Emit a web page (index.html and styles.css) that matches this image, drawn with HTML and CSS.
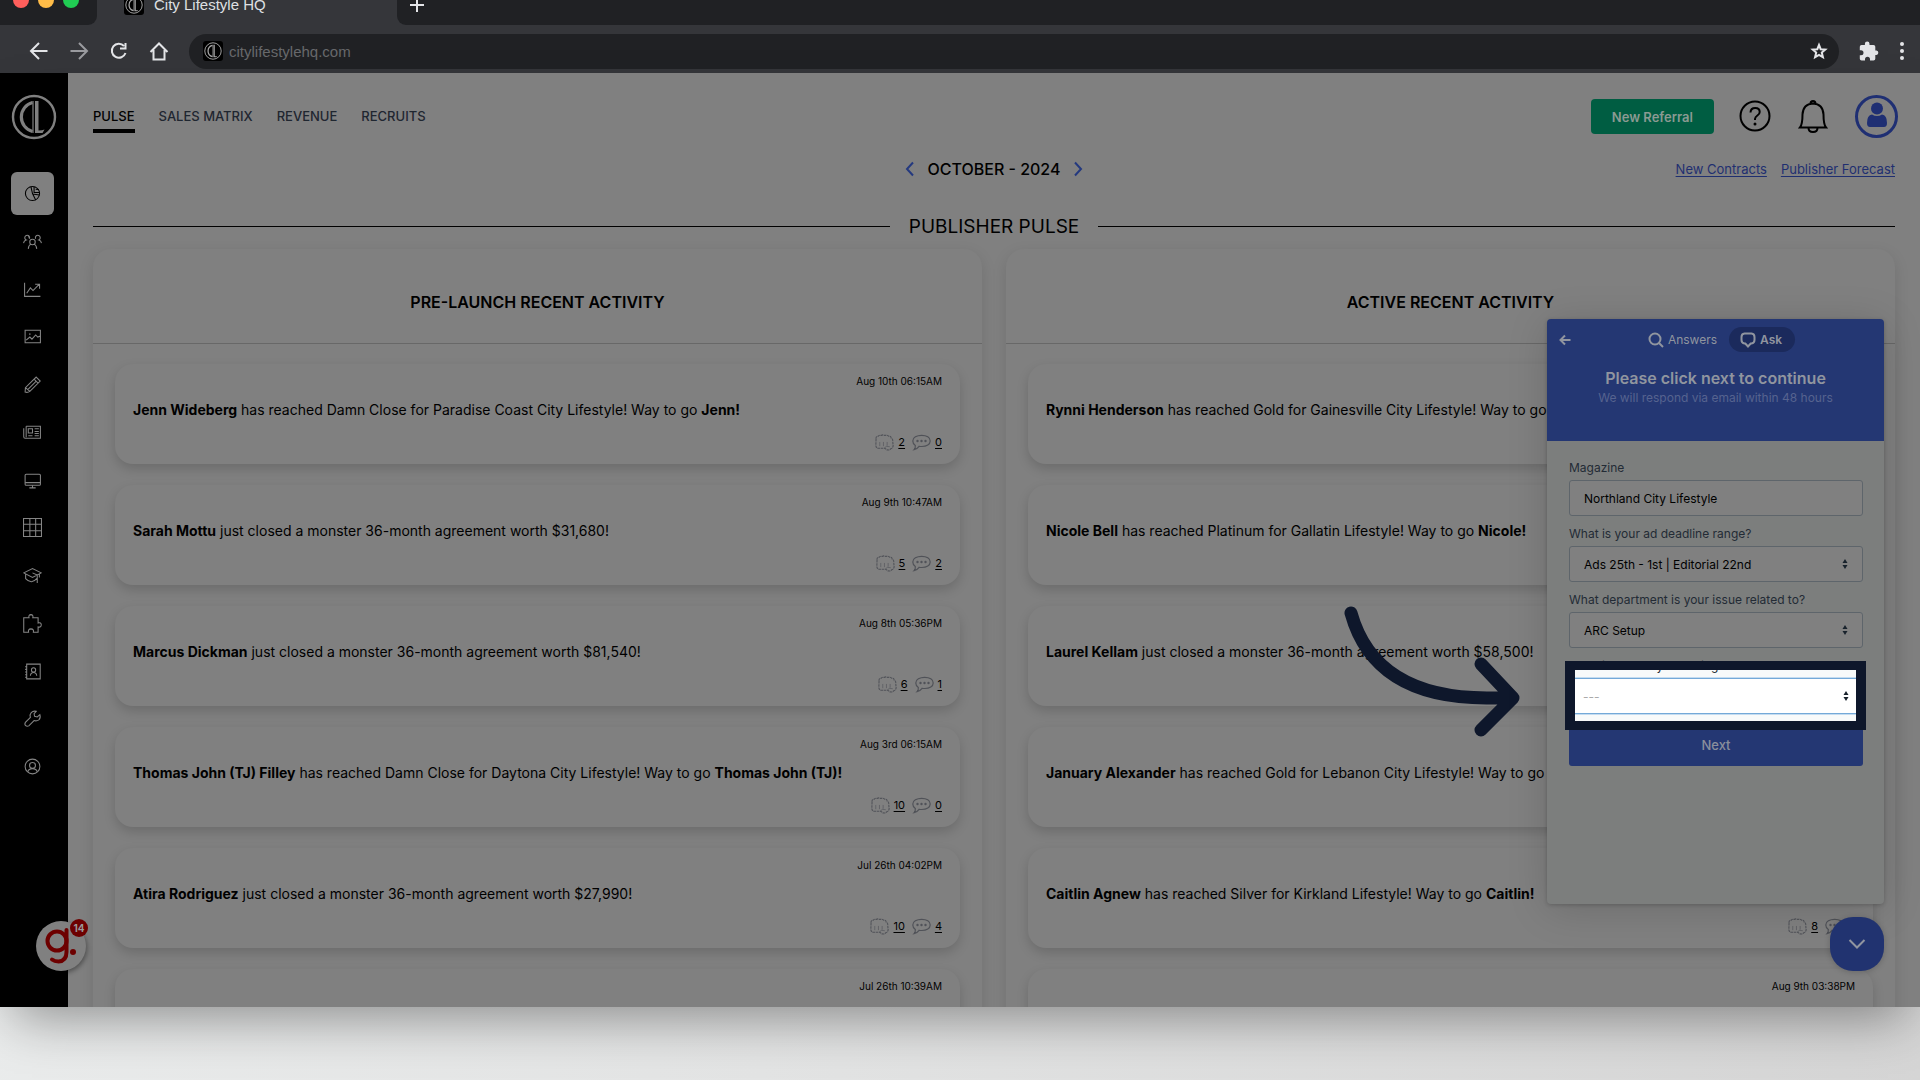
FILE: index.html
```
<!DOCTYPE html>
<html lang="en">
<head>
  <meta charset="UTF-8">
  <meta name="viewport" content="width=device-width, initial-scale=1.0">
  <title>City Lifestyle HQ</title>
  <link rel="stylesheet" href="styles.css">
</head>
<body>
  <svg class="defs" aria-hidden="true">
    <symbol id="logo" viewBox="0 0 46 46">
      <circle cx="23" cy="23" r="21" fill="none" stroke="currentColor" stroke-width="2.4"/>
      <path d="M21.500 8.500A15 15 0 0 0 21.500 37.500" fill="none" stroke="currentColor" stroke-width="3.200"/>
      <path d="M22 7v32" fill="none" stroke="currentColor" stroke-width="1.200"/>
      <path d="M24 7h3.500v29.500q4 0 6-1l-2 3.500H24z" fill="currentColor" stroke="none"/>
    </symbol>
    <symbol id="fist" viewBox="0 0 18 16">
      <path d="M1 4.500Q.7 2 2.800 2.200 3.800.6 5.700 1.300 7.500.2 9.300 1.300q2-.8 3.600.7 2.200-.2 2.500 2 1.800.8 1.400 3l.4 4.200q-.4 2.400-2.400 2.800-1.300 1.500-3.500 1l-2-1.500H3.600Q1 13.500.8 11z" fill="none" stroke="currentColor" stroke-width="1" stroke-dasharray="2.500 .6"/>
      <path d="M4.500 7.500v4M8 7.500v4M11.500 7.500v3.500M9 13q1.500-2.200 5-1" fill="none" stroke="currentColor" stroke-width=".6"/>
    </symbol>
    <symbol id="bubble" viewBox="0 0 19 16">
      <path d="M9.700.8c5 0 8.500 2.300 8.500 5.600s-3.500 5.600-8.500 5.600c-1 0-1.800 0-2.600-.2-1.200 1.600-2.900 3-5 3.300 1-1 1.400-2.500 1.200-4.200C1.700 9.800.8 8.200.8 6.400.8 3.100 4.700.8 9.700.8z" fill="none" stroke="currentColor" stroke-width="1.200"/>
      <g fill="currentColor" stroke="none"><circle cx="5.500" cy="6.500" r="1.200"/><circle cx="9.500" cy="6.500" r="1.200"/><circle cx="13.500" cy="6.500" r="1.200"/></g>
    </symbol>
  </svg>

  <!-- browser chrome -->
  <header class="browser">
    <div class="tab-strip">
      <div class="lights"><span class="light red"></span><span class="light amber"></span><span class="light green"></span></div>
      <div class="browser-tab"><span class="favicon"><svg><use href="#logo"/></svg></span>City Lifestyle HQ</div>
      <div class="strip-rest">
        <button class="icon-btn" aria-label="New tab"><svg width="16" height="16" viewBox="0 0 16 16"><path d="M8 1v14M1 8h14"/></svg></button>
      </div>
    </div>
    <div class="toolbar">
      <div class="nav-buttons">
        <button class="icon-btn" aria-label="Back"><svg width="20" height="20" viewBox="0 0 20 20"><path d="M18.500 10h-16M10 2l-8 8 8 8"/></svg></button>
        <button class="icon-btn dim" aria-label="Forward"><svg width="20" height="20" viewBox="0 0 20 20"><path d="M1.500 10h16M10 2l8 8-8 8"/></svg></button>
        <button class="icon-btn" aria-label="Reload"><svg width="20" height="20" viewBox="0 0 20 20"><path d="M15 5a7 7 0 1 0 1.500 7M16.500 2v5.500H11"/></svg></button>
        <button class="icon-btn" aria-label="Home"><svg width="20" height="20" viewBox="0 0 20 20"><path d="M1.500 11L10 2.500l8.500 8.500M4.500 9v9.500h11V9"/></svg></button>
      </div>
      <div class="address">
        <span class="favicon"><svg><use href="#logo"/></svg></span>
        <input class="url" type="text" value="citylifestylehq.com" aria-label="Address">
        <button class="icon-btn" aria-label="Bookmark"><svg width="18" height="18" viewBox="0 0 18 18"><path d="M9 3l1.700 4.200 4.600.4-3.500 3 1.100 4.600L9 12.800l-3.900 2.400 1.100-4.600-3.500-3 4.600-.4z"/></svg></button>
      </div>
      <button class="icon-btn" aria-label="Extensions"><svg class="solid" width="20" height="20" viewBox="0 0 20 20"><path d="M17.500 9.500h-1.200V5.800a1.800 1.800 0 0 0-1.800-1.800h-4V2.800a2.300 2.300 0 0 0-4.600 0V4H2.500A1.800 1.800 0 0 0 .8 5.800v3.400H2a2.500 2.500 0 0 1 0 5H.8v3.500a1.800 1.800 0 0 0 1.800 1.800H6v-1.200a2.500 2.500 0 0 1 5 0v1.200h3.500a1.800 1.800 0 0 0 1.800-1.800V14h1.200a2.300 2.300 0 0 0 0-4.500z"/></svg></button>
      <button class="icon-btn" aria-label="Menu"><svg class="solid" width="6" height="20" viewBox="0 0 6 20"><circle cx="3" cy="3" r="2"/><circle cx="3" cy="10" r="2"/><circle cx="3" cy="17" r="2"/></svg></button>
    </div>
  </header>

  <div class="app">
    <aside class="sidebar">
      <svg class="brand" aria-label="City Lifestyle"><use href="#logo"/></svg>
      <nav class="side-nav">
        <a href="#" class="active" aria-label="Pulse"><svg viewBox="0 0 18 18"><circle cx="9" cy="9" r="6.700"/><path d="M7.500 2.500L9 9l3 6.200M10.500 2.500V8h5.200M9 9.500l6.500 1M12 5l3 .3"/></svg></a>
        <a href="#" aria-label="Teams"><svg viewBox="0 0 18 18"><circle cx="9" cy="9.500" r="2.600"/><path d="M5 16q.2-3.500 2.500-4.500M13 16q-.2-3.500-2.500-4.500M6 6.500A2.300 2.300 0 1 0 3 7.500Q.8 8 .5 10.500M6 6q-.2-2-1.500-2.800M12 6.500a2.300 2.300 0 1 1 3 1q2.200.5 2.500 3"/></svg></a>
        <a href="#" aria-label="Sales"><svg viewBox="0 0 18 18"><path d="M1.500 2.500v13h15M3.500 12.500l3.500-5 2.500 2.500 6-6M11.500 4h4.200v4.200"/></svg></a>
        <a href="#" aria-label="Images"><svg viewBox="0 0 18 18"><path d="M2 3h14.500v12H2zM3 12.500l3.500-3 2 2 3.500-4 2 2 2.500-1M6.500 6v1.500"/></svg></a>
        <a href="#" aria-label="Editor"><svg viewBox="0 0 18 18"><path d="M12.500 2l3.800 3.700L6.500 15.500Q4.500 17 2 16.200L2.300 12zM10.500 4l3.700 3.700M12.300 6L4.500 13.800M2.300 12l4.200 3.500"/></svg></a>
        <a href="#" aria-label="News"><svg viewBox="0 0 18 18"><path d="M3 3h13.500v11.500H2Q.7 14.500.7 13V5M3 3v10.500M5 5.500h4v4H5zM11 5.500h4M11 8h4M11 10h4M5 12h4M11 12h4"/></svg></a>
        <a href="#" aria-label="Screens"><svg viewBox="0 0 18 18"><rect x="2" y="3" width="14.500" height="10.500" rx="1"/><path d="M2 11h14.500M9 13.500v2.500M6 16h6"/></svg></a>
        <a href="#" aria-label="Grid"><svg viewBox="0 0 18 18"><path d="M.5.5h17v17H.500zM.5 6h17M.5 12h17M6.500.5v17M12 .5v17"/></svg></a>
        <a href="#" aria-label="Training"><svg viewBox="0 0 18 18"><path d="M.7 6.500L9 2.500l8.300 4L9 10.800zM2.500 7.500V12q5.500 6 11-.5V7.800M9 6.500l4.500 2V16M15.500 7.500V11"/></svg></a>
        <a href="#" aria-label="Add-ons"><svg viewBox="0 0 18 18"><path d="M.7 3.500h5Q5 .7 7.500.6 10 .7 9.300 3.500h5v5q3-.8 3 1.800t-3 2v5h-4.500q.8-3-2.300-3.200-3 .2-2.200 3.200H.7z"/></svg></a>
        <a href="#" aria-label="Contacts"><svg viewBox="0 0 18 18"><path d="M3.500 2h12.800v14H3.500zM2 4.500h2M2 7h2M2 9.500h2M2 12h2M2 14.500h2M7 13q.3-3 3-3t3 3"/><circle cx="10" cy="7.500" r="2"/></svg></a>
        <a href="#" aria-label="Tools"><svg viewBox="0 0 18 18"><path d="M12.500 2.200L10.500 4.500l.5 2.500 2.500.5 2.500-2.200q1 3.200-1 5-2 1.500-4.500.7l-5 5Q3.800 16.800 2.500 15.800t-.2-3.200L7 8Q6 5.500 7.800 3.500t4.700-1.300z"/></svg></a>
        <a href="#" aria-label="Account"><svg viewBox="0 0 18 18"><circle cx="9" cy="9" r="7"/><circle cx="9" cy="8" r="2.800"/><path d="M4.500 14q.8-3 4.500-3t4.500 3"/></svg></a>
      </nav>
    </aside>

    <main class="main">
      <div class="topbar">
        <nav class="tabs">
          <a href="#" class="current">PULSE</a>
          <a href="#">SALES MATRIX</a>
          <a href="#">REVENUE</a>
          <a href="#">RECRUITS</a>
        </nav>
        <div class="top-actions">
          <button class="referral">New Referral</button>
          <button class="plain" aria-label="Help"><svg width="32" height="34" viewBox="0 0 32 34"><circle cx="16" cy="16" r="14.500"/><path d="M11.500 12.500q.2-4.500 4.700-4.500t4.500 4q0 2-2.300 3.500T16 19v1"/><circle class="dot" cx="16" cy="24" r="1.500"/></svg></button>
          <button class="plain" aria-label="Notifications"><svg width="30" height="34" viewBox="0 0 30 34"><path d="M2 27.500q2.500-3 2.500-13Q5 4 15 3.500 25 4 25.500 14.500q0 10 2.500 13zM12.500 3.500q0-2.500 2.500-2.500t2.500 2.500M10.500 28q0 4 4.500 4t4.500-4"/></svg></button>
          <button class="plain avatar" aria-label="Profile"><svg width="43" height="43" viewBox="0 0 43 43"><circle class="ring" cx="21.500" cy="21.500" r="20"/><circle class="fill" cx="22" cy="13.500" r="6"/><path class="fill" d="M12 28q0-8 5-8.500 5 3 10 0 5 .5 5 8.500 0 4-3 4H15q-3 0-3-4z"/></svg></button>
        </div>
      </div>

      <div class="month-row">
        <div class="month">
          <button class="plain" aria-label="Previous month"><svg width="10" height="16" viewBox="0 0 10 16"><path d="M8 1.500L2 8l6 6.500"/></svg></button>
          <span>OCTOBER - 2024</span>
          <button class="plain" aria-label="Next month"><svg width="10" height="16" viewBox="0 0 10 16"><path d="M2 1.500L8 8l-6 6.500"/></svg></button>
        </div>
        <div class="quick-links">
          <a href="#">New Contracts</a>
          <a href="#">Publisher Forecast</a>
        </div>
      </div>

      <h1 class="section-title">PUBLISHER PULSE</h1>

      <div class="panels">
        <section class="panel">
          <h2>PRE-LAUNCH RECENT ACTIVITY</h2>
          <div class="feed">
            <article class="card">
              <time>Aug 10th 06:15AM</time>
              <p><b>Jenn Wideberg</b> has reached Damn Close for Paradise Coast City Lifestyle! Way to go <b>Jenn!</b></p>
              <div class="reactions"><svg><use href="#fist"/></svg><a href="#">2</a><svg><use href="#bubble"/></svg><a href="#">0</a></div>
            </article>
            <article class="card">
              <time>Aug 9th 10:47AM</time>
              <p><b>Sarah Mottu</b> just closed a monster 36-month agreement worth $31,680!</p>
              <div class="reactions"><svg><use href="#fist"/></svg><a href="#">5</a><svg><use href="#bubble"/></svg><a href="#">2</a></div>
            </article>
            <article class="card">
              <time>Aug 8th 05:36PM</time>
              <p><b>Marcus Dickman</b> just closed a monster 36-month agreement worth $81,540!</p>
              <div class="reactions"><svg><use href="#fist"/></svg><a href="#">6</a><svg><use href="#bubble"/></svg><a href="#">1</a></div>
            </article>
            <article class="card">
              <time>Aug 3rd 06:15AM</time>
              <p><b>Thomas John (TJ) Filley</b> has reached Damn Close for Daytona City Lifestyle! Way to go <b>Thomas John (TJ)!</b></p>
              <div class="reactions"><svg><use href="#fist"/></svg><a href="#">10</a><svg><use href="#bubble"/></svg><a href="#">0</a></div>
            </article>
            <article class="card">
              <time>Jul 26th 04:02PM</time>
              <p><b>Atira Rodriguez</b> just closed a monster 36-month agreement worth $27,990!</p>
              <div class="reactions"><svg><use href="#fist"/></svg><a href="#">10</a><svg><use href="#bubble"/></svg><a href="#">4</a></div>
            </article>
            <article class="card">
              <time>Jul 26th 10:39AM</time>
            </article>
          </div>
        </section>

        <section class="panel">
          <h2>ACTIVE RECENT ACTIVITY</h2>
          <div class="feed">
            <article class="card">
              <p><b>Rynni Henderson</b> has reached Gold for Gainesville City Lifestyle! Way to go</p>
            </article>
            <article class="card">
              <p><b>Nicole Bell</b> has reached Platinum for Gallatin Lifestyle! Way to go <b>Nicole!</b></p>
            </article>
            <article class="card">
              <p><b>Laurel Kellam</b> just closed a monster 36-month agreement worth $58,500!</p>
            </article>
            <article class="card">
              <p><b>January Alexander</b> has reached Gold for Lebanon City Lifestyle! Way to go</p>
            </article>
            <article class="card">
              <p><b>Caitlin Agnew</b> has reached Silver for Kirkland Lifestyle! Way to go <b>Caitlin!</b></p>
              <div class="reactions"><svg><use href="#fist"/></svg><a href="#">8</a><svg><use href="#bubble"/></svg><a href="#">0</a></div>
            </article>
            <article class="card">
              <time>Aug 9th 03:38PM</time>
            </article>
          </div>
        </section>
      </div>
    </main>

    <!-- arrow pointing at the highlighted field -->
    <svg class="pointer" width="188" height="136" viewBox="0 0 188 136"><path d="M12 12C28 70 76 103 172 96M142 63l32 34-32 32"/></svg>

    <!-- help widget -->
    <form class="widget">
      <div class="widget-head">
        <button type="button" class="plain back" aria-label="Go back"><svg width="12" height="12" viewBox="0 0 12 12"><path d="M11.500 6H1.500M6 1.500L1.500 6 6 10.500"/></svg></button>
        <div class="widget-tabs">
          <button type="button" class="plain"><svg width="16" height="16" viewBox="0 0 16 16"><circle cx="7" cy="7" r="5.500"/><path d="M11 11l4 4"/></svg>Answers</button>
          <button type="button" class="plain ask"><svg width="16" height="16" viewBox="0 0 16 16"><path d="M4.500 1.500h7q3 .3 3 3.500v3q0 3-3 3.500h-.8L8 14.500l-2.700-3h-.8Q1.500 11 1.500 8V5q0-3.200 3-3.500z"/></svg>Ask</button>
        </div>
        <h3>Please click next to continue</h3>
        <p>We will respond via email within 48 hours</p>
      </div>
      <div class="widget-body">
        <div class="field">
          <label for="magazine">Magazine</label>
          <input id="magazine" type="text" value="Northland City Lifestyle">
        </div>
        <div class="field">
          <label for="deadline">What is your ad deadline range?</label>
          <select id="deadline"><option>Ads 25th - 1st | Editorial 22nd</option></select>
        </div>
        <div class="field">
          <label for="department">What department is your issue related to?</label>
          <select id="department"><option>ARC Setup</option></select>
        </div>
        <div class="field spotlight">
          <label for="issue">What issue are you having?</label>
          <select id="issue"><option>---</option></select>
        </div>
        <button type="button" class="next">Next</button>
      </div>
    </form>
    <button class="widget-toggle" aria-label="Close help"><svg width="18" height="12" viewBox="0 0 18 12"><path d="M1.500 2L9 9.500 16.500 2"/></svg></button>

    <button class="g-badge" aria-label="Messages">
      <svg width="34" height="36" viewBox="0 0 34 36"><circle cx="13" cy="13" r="9.500"/><path d="M22.500 2v22q0 9-8 9.500-4 0-6.500-2"/><circle class="dot" cx="29" cy="24" r="3"/></svg>
      <span>14</span>
    </button>
  </div>
</body>
</html>
```

FILE: styles.css
```
* {
  box-sizing: border-box;
  margin: 0;
  padding: 0;
}

body {
  display: flex;
  flex-direction: column;
  height: 100vh;
  padding-bottom: 73px;
  overflow: hidden;
  font-family: Inter, sans-serif;
  color: #000;
  background: linear-gradient(100deg, #ebeded 0%, #e3e4e4 45%, #d5d5d5 100%);
}

button, input, select {
  font: inherit;
}

button {
  border: none;
  cursor: pointer;
}

svg {
  fill: none;
  stroke: currentColor;
}

.defs {
  position: absolute;
  width: 0;
  height: 0;
}

/* browser chrome */
.browser {
  background: #35363a;
  font-family: "Liberation Sans", Arial, sans-serif;
  font-size: 15px;
}

.tab-strip {
  display: flex;
  height: 41px;
  margin-top: -16px;
}

.lights {
  display: flex;
  gap: 9px;
  width: 97px;
  padding: 8px 13px;
  background: #202124;
  border-bottom-right-radius: 9px;
}

.light {
  width: 16px;
  height: 16px;
  border-radius: 50%;
}

.red { background: #ff5f5c; }
.amber { background: #ffbc48; }
.green { background: #20cc53; }

.browser-tab {
  display: flex;
  align-items: center;
  gap: 10px;
  width: 300px;
  padding-left: 27px;
  color: #dfe0e3;
}

.favicon {
  display: grid;
  place-items: center;
  width: 20px;
  height: 20px;
  border-radius: 3px;
  background: #000;
  color: #aaa;
}

.favicon svg {
  width: 18px;
  height: 18px;
}

.strip-rest {
  display: flex;
  align-items: center;
  flex: 1;
  padding-left: 12px;
  background: #202124;
  border-bottom-left-radius: 9px;
}

.toolbar {
  display: flex;
  align-items: center;
  gap: 20px;
  height: 48px;
  padding: 4px 15px 0 29px;
}

.nav-buttons {
  display: flex;
  gap: 20px;
}

.icon-btn {
  display: flex;
  background: none;
  color: #e4e5e8;
}

.icon-btn svg {
  stroke-width: 2;
}

.icon-btn .solid {
  fill: currentColor;
  stroke: none;
}

.dim { color: #9b9ca0; }

.address {
  display: flex;
  align-items: center;
  gap: 6px;
  flex: 1;
  height: 35px;
  padding: 0 11px 0 14px;
  border-radius: 18px;
  background: #202124;
}

.url {
  flex: 1;
  border: none;
  outline: none;
  background: none;
  color: #68696c;
}

/* app shell */
.app {
  position: relative;
  display: flex;
  flex: 1;
  min-height: 0;
  background: #808080;
  box-shadow: 0 24px 50px -14px rgba(0, 0, 0, 0.4);
}

.sidebar {
  display: flex;
  flex-direction: column;
  width: 68px;
  padding: 21px 11px 0;
  background: #000;
  color: #808080;
}

.brand {
  width: 46px;
  height: 46px;
}

.side-nav {
  display: flex;
  flex-direction: column;
  justify-content: space-between;
  height: 616px;
  margin-top: 32px;
}

.side-nav a {
  display: grid;
  place-items: center;
  width: 43px;
  height: 43px;
  border-radius: 6px;
  color: #858585;
}

.side-nav a.active {
  background: #808080;
  color: #000;
}

.side-nav svg {
  width: 19px;
  height: 19px;
}

.main {
  flex: 1;
  padding: 22px 25px 0;
  overflow: hidden;
}

.topbar {
  display: flex;
  align-items: center;
  justify-content: space-between;
  height: 43px;
}

.tabs {
  display: flex;
  gap: 24px;
  font-size: 13px;
  font-weight: 500;
  line-height: 20px;
}

.tabs a {
  padding: 1px 0 3px;
  border: solid transparent;
  border-width: 4px 0;
  color: #1f2630;
  text-decoration: none;
}

.tabs .current {
  color: #000;
  border-bottom-color: #000;
}

.top-actions {
  display: flex;
  align-items: center;
  gap: 27px;
}

.referral {
  height: 35px;
  padding: 0 21px;
  margin-right: -2px;
  border-radius: 4px;
  background: #005d42;
  color: #8a9a92;
  font-size: 13px;
  font-weight: 600;
}

.plain {
  display: flex;
  align-items: center;
  background: none;
  color: inherit;
}

.top-actions .plain svg {
  stroke-width: 2;
}

.top-actions .dot,
.top-actions .fill {
  fill: currentColor;
  stroke: none;
}

.top-actions .ring {
  stroke-width: 3;
}

.top-actions .avatar {
  color: #1f2f73;
  margin-right: -3px;
}

.month-row {
  display: grid;
  grid-template-columns: 1fr auto 1fr;
  align-items: center;
  height: 28px;
  margin-top: 17px;
}

.month {
  grid-column: 2;
  display: flex;
  align-items: center;
  gap: 13px;
  font-size: 16px;
  font-weight: 500;
}

.month .plain {
  color: #24397f;
}

.month svg {
  stroke-width: 2;
}

.quick-links {
  display: flex;
  justify-content: flex-end;
  gap: 14px;
  font-size: 13px;
  font-weight: 400;
}

.quick-links a {
  color: #1f2f70;
  text-underline-offset: 2px;
}

.section-title {
  display: flex;
  align-items: center;
  gap: 19px;
  height: 28px;
  margin-top: 29px;
  font-size: 19px;
  font-weight: 400;
}

.section-title::before,
.section-title::after {
  content: "";
  flex: 1;
  border-top: 1px solid #000;
}

.panels {
  display: grid;
  grid-template-columns: 1fr 1fr;
  gap: 24px;
  margin-top: 9px;
}

.panel {
  border-radius: 18px;
  background: #808080;
  box-shadow: 0 5px 15px rgba(0, 0, 0, 0.12);
}

.panel h2 {
  padding: 42px 0 30px;
  border-bottom: 1px solid #686868;
  font-size: 16px;
  font-weight: 600;
  line-height: 22px;
  text-align: center;
}

.feed {
  display: grid;
  gap: 21px;
  padding: 20px 22px;
}

.card {
  display: grid;
  grid-template-rows: 18px 38px 28px;
  align-items: center;
  padding: 8px 18px;
  border-radius: 18px;
  background: #808080;
  box-shadow: 0 5px 12px rgba(0, 0, 0, 0.16);
}

.card time {
  font-size: 10px;
  text-align: right;
}

.card p {
  grid-row: 2;
  font-size: 14px;
  white-space: nowrap;
}

.card b {
  font-weight: 700;
}

.reactions {
  grid-row: 3;
  display: flex;
  align-items: center;
  justify-content: flex-end;
  gap: 4px;
  font-size: 11px;
}

.reactions a {
  color: #000;
  text-underline-offset: 2px;
}

.reactions a + svg {
  margin-left: 3px;
}

.reactions svg {
  width: 19px;
  height: 17px;
  color: #505258;
}

/* guide arrow */
.pointer {
  position: absolute;
  top: 528px;
  right: 393px;
  color: #0e172b;
  stroke-width: 13;
  stroke-linecap: round;
  stroke-linejoin: round;
}

/* help widget */
.widget {
  position: absolute;
  top: 246px;
  right: 36px;
  width: 337px;
  height: 585px;
  border-radius: 4px;
  background: #7c7e7d;
  box-shadow: 0 5px 40px rgba(0, 0, 0, 0.16), 0 1px 4px rgba(0, 0, 0, 0.2);
  font-size: 12px;
}

.widget-head {
  position: relative;
  height: 122px;
  padding-top: 8px;
  border-radius: 4px 4px 0 0;
  background: #243773;
  color: #90959f;
  text-align: center;
}

.widget-head svg {
  stroke-width: 2;
}

.back {
  position: absolute;
  top: 15px;
  left: 12px;
}

.widget-tabs {
  display: flex;
  justify-content: center;
  gap: 12px;
  padding-left: 12px;
}

.widget-tabs .plain {
  gap: 4px;
  height: 25px;
}

.widget-tabs .ask {
  padding: 0 13px 0 11px;
  border-radius: 13px;
  background: #1b2a5c;
  font-weight: 600;
}

.widget-head h3 {
  margin-top: 16px;
  font-size: 16px;
  font-weight: 600;
  line-height: 20px;
}

.widget-head p {
  line-height: 20px;
  color: #56638f;
}

.widget-body {
  padding: 18px 21px 0 22px;
}

.field {
  margin-bottom: 9px;
}

.field label {
  display: block;
  margin-bottom: 3px;
  line-height: 18px;
  color: #232b35;
}

.field input,
.field select {
  display: block;
  width: 100%;
  height: 36px;
  padding: 0 14px;
  border: 1px solid #5e656b;
  border-radius: 3px;
  outline: none;
  background-color: #808080;
  color: #000;
}

.field select {
  appearance: none;
  background-image: url("data:image/svg+xml,%3Csvg xmlns='http://www.w3.org/2000/svg' width='6' height='10'%3E%3Cpath d='M3 0l2.500 4h-5zM3 10L.5 6h5z' fill='%2318222c'/%3E%3C/svg%3E");
  background-repeat: no-repeat;
  background-position: right 14px center;
}

.spotlight {
  position: relative;
  background: linear-gradient(transparent 10px, #f8fafa 10px);
}

.spotlight::after {
  content: "";
  position: absolute;
  inset: 4px -3px -16px -4px;
  border: 9px solid #0e172b;
  border-width: 9px 10px;
  pointer-events: none;
}

.field.spotlight select {
  border: 1px solid #74a9d8;
  border-width: 1px 0;
  background-color: #fff;
  color: #aaa;
  box-shadow: 0 0 0 1px #c5dcf0, 0 7px #f8fafa;
}

.next {
  width: 100%;
  height: 43px;
  border-radius: 3px;
  background: #243773;
  color: #8a8f9c;
  font-size: 13px;
  font-weight: 500;
}

.widget-toggle {
  position: absolute;
  right: 36px;
  bottom: 36px;
  display: grid;
  place-items: center;
  width: 54px;
  height: 54px;
  border-radius: 23px;
  background: #213370;
  color: #9095a0;
  box-shadow: 0 1px 6px rgba(0, 0, 0, 0.2);
}

.widget-toggle svg {
  stroke-width: 2;
}

.g-badge {
  position: absolute;
  left: 36px;
  bottom: 36px;
  display: grid;
  place-items: center;
  width: 50px;
  height: 50px;
  border-radius: 50%;
  background: #808080;
  color: #6d0000;
  box-shadow: 1px 2px 5px rgba(0, 0, 0, 0.4);
}

.g-badge svg {
  stroke-width: 4;
  stroke-linecap: round;
}

.g-badge .dot {
  fill: currentColor;
  stroke: none;
}

.g-badge span {
  position: absolute;
  top: -2px;
  right: -2px;
  width: 18px;
  height: 18px;
  border-radius: 50%;
  background: #6d0000;
  color: #999;
  font-size: 10px;
  font-weight: 700;
  line-height: 18px;
}
```
